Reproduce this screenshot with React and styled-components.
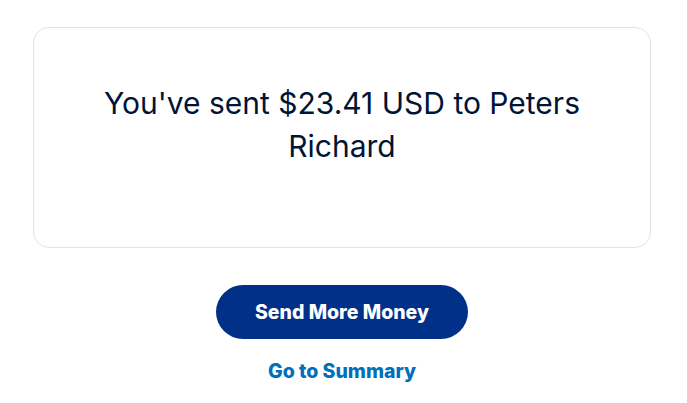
import React from 'react'
import styled, { createGlobalStyle } from 'styled-components'

const GlobalStyle = createGlobalStyle`
  body {
    margin: 0;
    background: #ffffff;
    font-family: Inter, "Liberation Sans", Arial, sans-serif;
  }
`

const Page = styled.div`
  display: flex;
  flex-direction: column;
  align-items: center;
  padding: 27px 36px 0 33px;
`

const Card = styled.div`
  width: 100%;
  box-sizing: border-box;
  border: 1px solid #e3e3e3;
  border-radius: 16px;
  padding: 54px 48px 0;
  height: 221px;
  display: flex;
  justify-content: center;
`

const Message = styled.p`
  margin: 0;
  text-align: center;
  font-size: 30px;
  line-height: 43px;
  color: #001435;
`

const PrimaryButton = styled.button`
  margin-top: 37px;
  width: 252px;
  height: 54px;
  border: none;
  border-radius: 27px;
  background: #003087;
  color: #ffffff;
  font-family: inherit;
  font-size: 19.5px;
  font-weight: 800;
  cursor: pointer;
`

const TextLink = styled.a`
  margin-top: 20px;
  color: #0070ba;
  font-size: 19.5px;
  font-weight: 800;
  text-decoration: none;
  line-height: 24px;
`

export default function App() {
  return (
    <>
      <GlobalStyle />
      <Page>
        <Card>
          <Message>You've sent $23.41 USD to Peters Richard</Message>
        </Card>
        <PrimaryButton>Send More Money</PrimaryButton>
        <TextLink href="#">Go to Summary</TextLink>
      </Page>
    </>
  )
}
